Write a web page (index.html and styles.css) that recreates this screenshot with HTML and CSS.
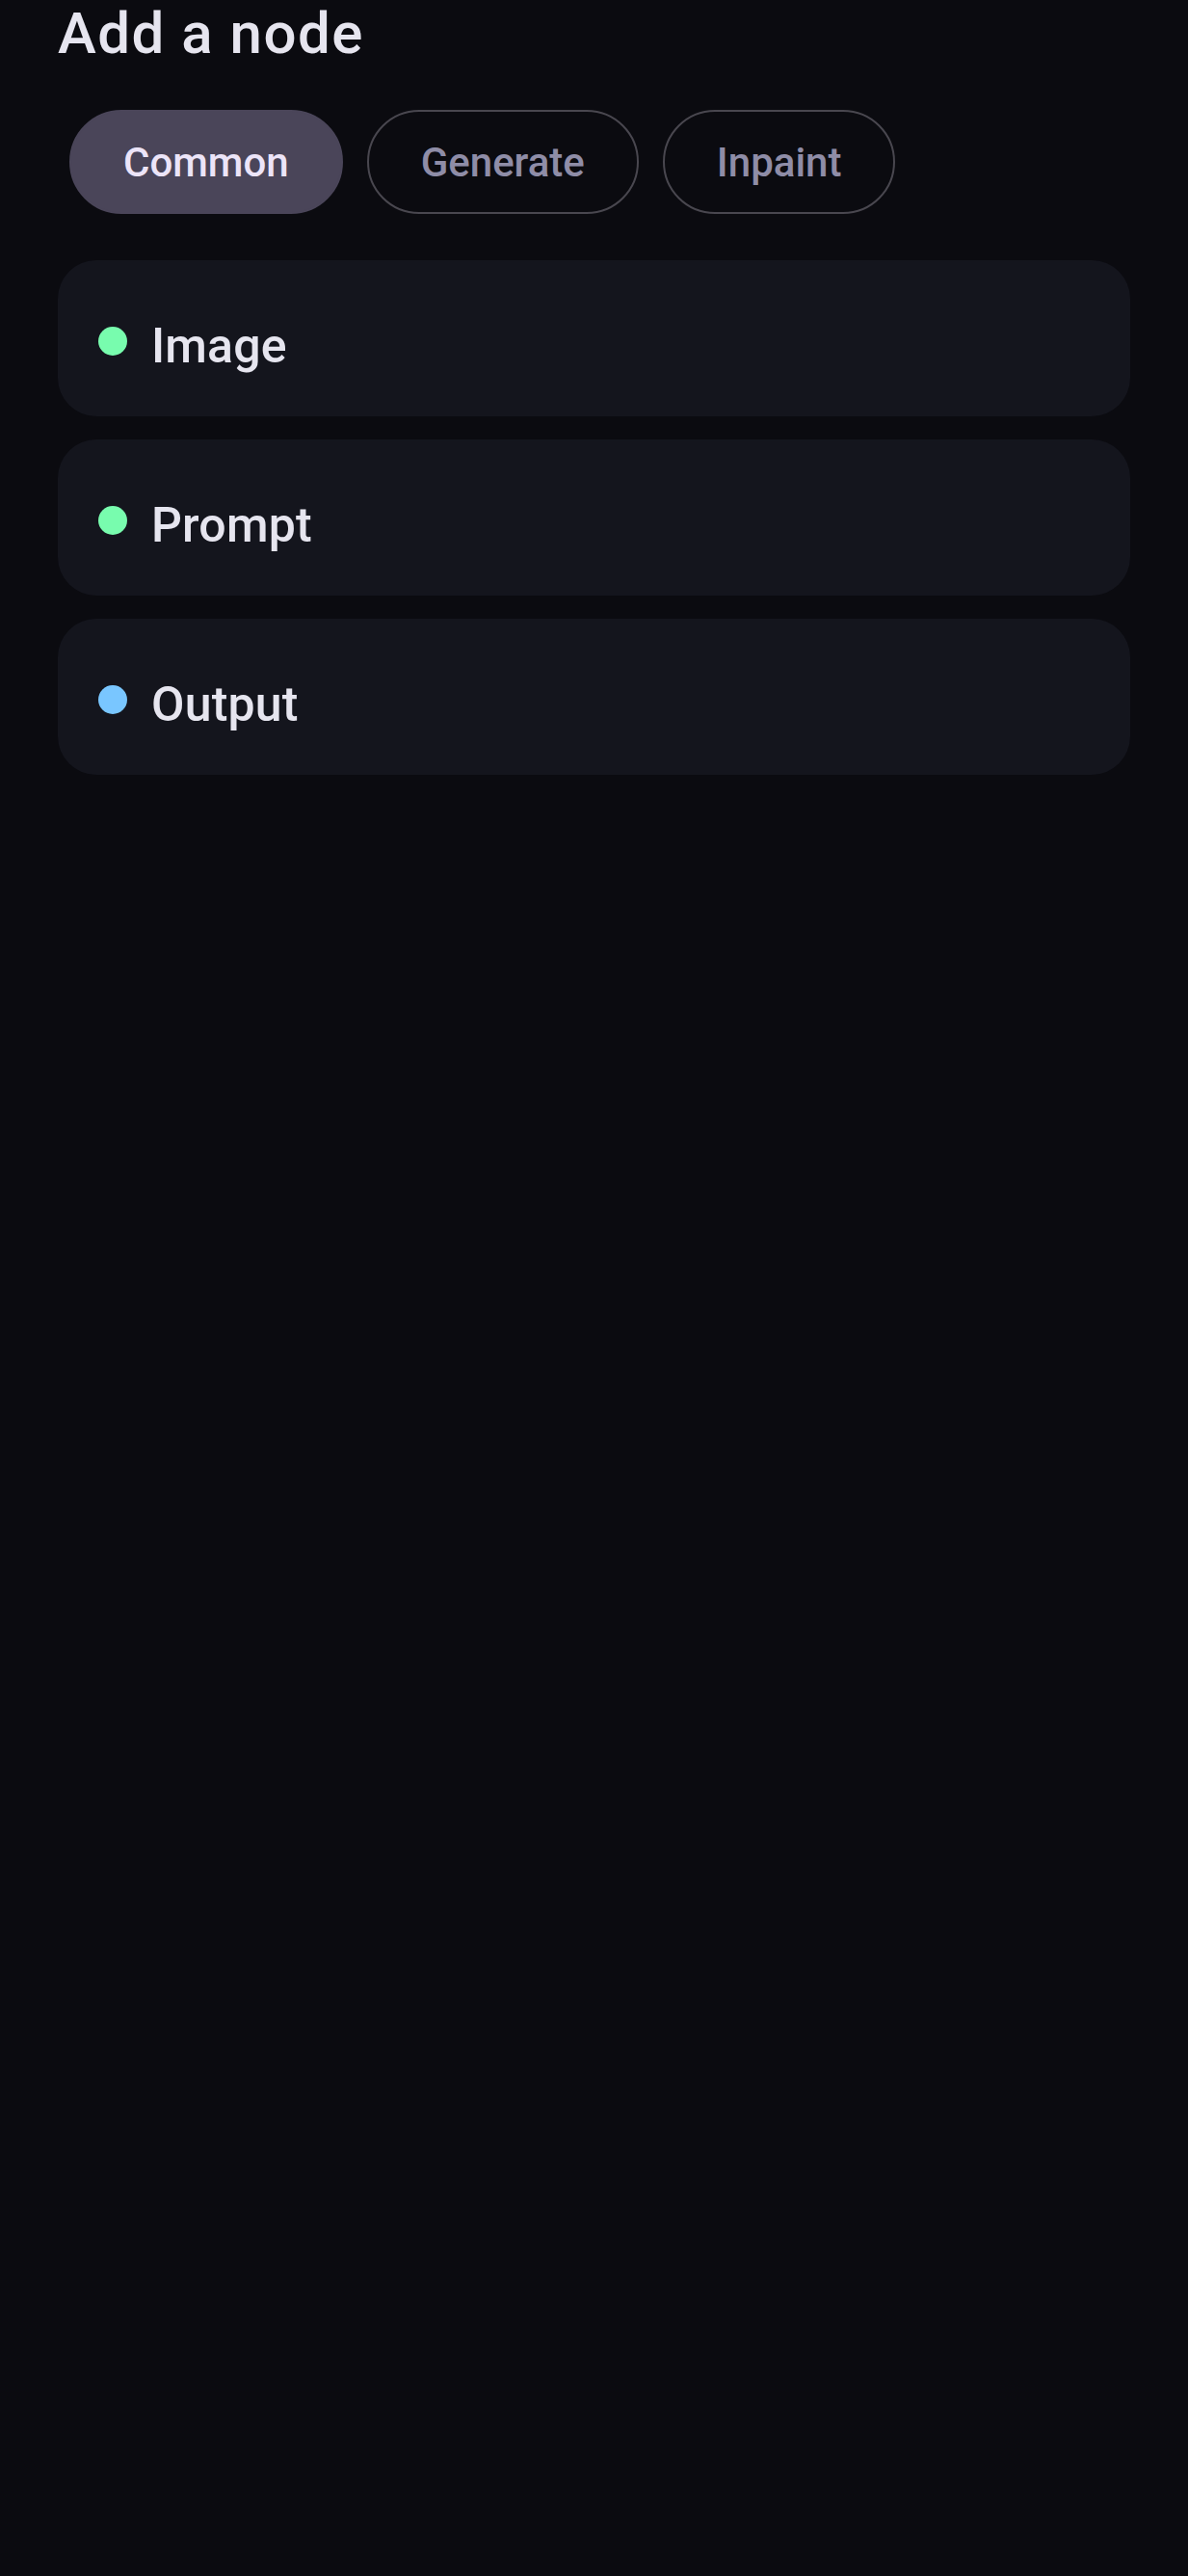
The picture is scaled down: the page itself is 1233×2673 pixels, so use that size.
FILE: index.html
```html
<!DOCTYPE html>
<html lang="en">
<head>
<meta charset="utf-8">
<title>Add a node</title>
<link rel="stylesheet" href="styles.css">
</head>
<body>
<main class="sheet">
  <h1 class="sheet-title">Add a node</h1>
  <div class="tabs">
    <button class="tab tab-active">Common</button>
    <button class="tab">Generate</button>
    <button class="tab">Inpaint</button>
  </div>
  <ul class="node-list">
    <li class="node-card"><span class="dot dot-green"></span><span class="node-name">Image</span></li>
    <li class="node-card"><span class="dot dot-green"></span><span class="node-name">Prompt</span></li>
    <li class="node-card"><span class="dot dot-blue"></span><span class="node-name">Output</span></li>
  </ul>
</main>
</body>
</html>
```

FILE: styles.css
```css
html, body {
  margin: 0;
  padding: 0;
  background: #0b0b10;
}
body {
  min-height: 2673px;
  font-family: Roboto, "Noto Sans", "Liberation Sans", sans-serif;
  color: #e6e5ef;
}
.sheet {
  padding: 0 60px;
}
.sheet-title {
  margin: 0;
  font-size: 60px;
  font-weight: 500;
  line-height: 70px;
  color: #e6e5ef;
  letter-spacing: 1.5px;
}
.tabs {
  display: flex;
  gap: 25px;
  margin-top: 44px;
  padding-left: 12px;
}
.tab {
  box-sizing: border-box;
  height: 108px;
  display: inline-flex;
  align-items: center;
  padding: 0 54px;
  border-radius: 54px;
  border: 2.5px solid #49474f;
  background: transparent;
  color: #8f8da7;
  font-family: Roboto, "Noto Sans", "Liberation Sans", sans-serif;
  font-size: 42px;
  font-weight: 500;
}
.tab-active {
  background: #4a4559;
  border-color: #4a4559;
  color: #ece4f8;
}
.node-list {
  list-style: none;
  margin: 48px 0 0;
  padding: 0;
  display: flex;
  flex-direction: column;
  gap: 24px;
}
.node-card {
  box-sizing: border-box;
  height: 162px;
  display: flex;
  align-items: flex-start;
  gap: 25px;
  padding: 60px 42px 0;
  background: #14151d;
  border-radius: 40px;
}
.dot {
  flex: none;
  width: 30px;
  height: 30px;
  margin-top: 9px;
  border-radius: 50%;
}
.dot-green { background: #78fcae; }
.dot-blue { background: #79c6ff; }
.node-name {
  font-size: 50px;
  font-weight: 500;
  line-height: 59px;
  letter-spacing: 0.2px;
  color: #e6e5ef;
}
```
